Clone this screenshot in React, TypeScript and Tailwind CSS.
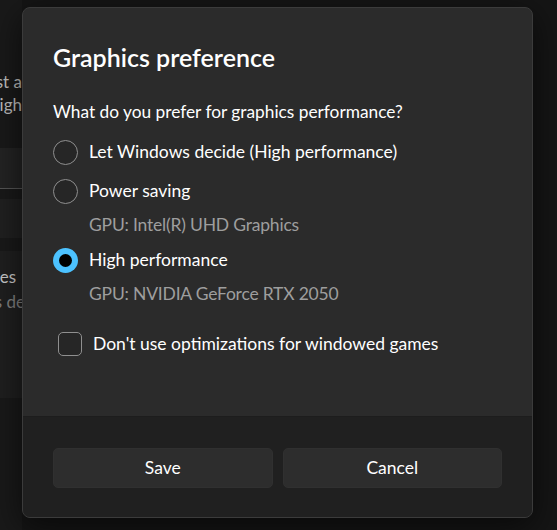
import { useState } from "react"

const options = [
    { id: "auto", label: "Let Windows decide (High performance)" },
    { id: "saving", label: "Power saving", gpu: "GPU: Intel(R) UHD Graphics" },
    { id: "high", label: "High performance", gpu: "GPU: NVIDIA GeForce RTX 2050" },
]

function Radio({ checked }: { checked: boolean }) {
    if (checked) {
        return (
            <span className="flex h-[25px] w-[25px] shrink-0 items-center justify-center rounded-full bg-[#4cc2ff]">
                <span className="h-[13px] w-[13px] rounded-full bg-black" />
            </span>
        )
    }
    return <span className="h-[25px] w-[25px] shrink-0 rounded-full border-[1.5px] border-[#8f8f8f] bg-[#262626]" />
}

export default function App() {
    const [choice, setChoice] = useState("high")
    const [noOpt, setNoOpt] = useState(false)

    return (
        <div className="relative h-[530px] w-[557px] overflow-hidden bg-[#151515] font-['Segoe_UI','Lato',sans-serif] text-white">
            {/* settings page behind the dialog, only its left edge shows */}
            <div className="flex h-full w-[22px] flex-col bg-[#191919] text-[17px]">
                <div className="h-[70px] shrink-0" />
                <div className="flex justify-end overflow-hidden whitespace-nowrap leading-[23px] text-[#bdbdbd]">
                    <span>Boost to just a</span>
                </div>
                <div className="flex justify-end overflow-hidden whitespace-nowrap leading-[23px] text-[#bdbdbd]">
                    <span>to run high</span>
                </div>
                <div className="h-[32px] shrink-0" />
                <div className="h-[41px] shrink-0 border-b border-[#555] bg-[#232323]" />
                <div className="h-[10px] shrink-0" />
                <div className="h-[39px] shrink-0 bg-[#202020]" />
                <div className="h-[13px] shrink-0" />
                <div className="flex h-[147px] shrink-0 flex-col bg-[#1f1f1f] pt-[13px]">
                    <div className="flex w-[16px] justify-end overflow-hidden whitespace-nowrap leading-[25px] text-[#c8c8c8]">
                        <span>Custom options for apps es</span>
                    </div>
                    <div className="flex w-[22px] overflow-hidden">
                        <div className="flex w-[25px] shrink-0 justify-end overflow-hidden whitespace-nowrap leading-[25px] text-[#808080]">
                            <span>Add apps de</span>
                        </div>
                    </div>
                </div>
            </div>

            {/* dialog */}
            <div className="absolute left-[22px] top-[7px] flex h-[511px] w-[511px] flex-col overflow-hidden rounded-lg border border-[#3b3b3b] bg-[#2b2b2b] shadow-[0_8px_32px_rgba(0,0,0,0.6)]">
                <div className="flex flex-1 flex-col px-[30px] pt-[32px]">
                    <h2 className="text-[25px] font-semibold leading-[34px]">Graphics preference</h2>
                    <p className="mt-[26px] text-[17.3px] leading-[24px]">What do you prefer for graphics performance?</p>
                    <div className="mt-[9px] flex flex-col">
                        {options.map((o) => (
                            <div key={o.id} className="flex flex-col">
                                <button
                                    onClick={() => setChoice(o.id)}
                                    className="flex h-[39px] items-center gap-[11px] text-left text-[17.5px]"
                                >
                                    <Radio checked={choice === o.id} />
                                    <span>{o.label}</span>
                                </button>
                                {o.gpu && (
                                    <div className="mb-[4px] mt-[2px] pl-[36px] text-[17.5px] leading-[24px] tracking-[-0.2px] text-[#9e9e9e]">{o.gpu}</div>
                                )}
                            </div>
                        ))}
                    </div>
                    <button
                        onClick={() => setNoOpt(!noOpt)}
                        className="ml-[5px] mt-[21px] flex items-center gap-[11px] text-left text-[17.5px]"
                    >
                        <span className="h-[24px] w-[24px] shrink-0 rounded-[5px] border border-[#8f8f8f] bg-[#262626]" />
                        <span>Don't use optimizations for windowed games</span>
                    </button>
                </div>
                <div className="flex h-[101px] shrink-0 gap-[10px] border-t border-[#1d1d1d] bg-[#202020] px-[30px] pt-[31px]">
                    <button className="h-[40px] flex-1 rounded-[5px] border border-[#303030] bg-[#2d2d2d] text-[17.5px]">Save</button>
                    <button className="h-[40px] flex-1 rounded-[5px] border border-[#303030] bg-[#2d2d2d] text-[17.5px]">Cancel</button>
                </div>
            </div>
        </div>
    )
}
